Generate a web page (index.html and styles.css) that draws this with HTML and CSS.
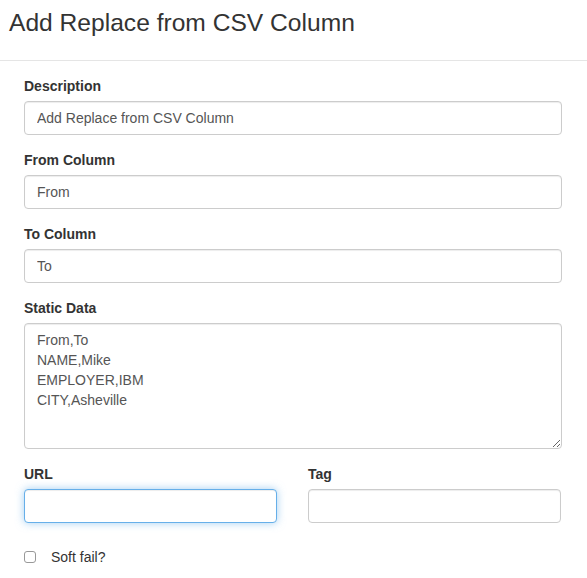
FILE: index.html
```html
<!DOCTYPE html>
<html>
<head>
<meta charset="utf-8">
<link rel="stylesheet" href="styles.css">
</head>
<body>
<div class="modal">
  <div class="modal-header">
    <h4 class="modal-title">Add Replace from CSV Column</h4>
  </div>
  <div class="modal-body">
    <div class="form-group">
      <label class="lbl">Description</label>
      <input class="form-control" type="text" value="Add Replace from CSV Column">
    </div>
    <div class="form-group">
      <label class="lbl">From Column</label>
      <input class="form-control" type="text" value="From">
    </div>
    <div class="form-group">
      <label class="lbl">To Column</label>
      <input class="form-control" type="text" value="To">
    </div>
    <div class="form-group">
      <label class="lbl">Static Data</label>
      <textarea class="form-control area">From,To
NAME,Mike
EMPLOYER,IBM
CITY,Asheville</textarea>
    </div>
    <div class="row">
      <div class="form-group">
        <label class="lbl">URL</label>
        <input class="form-control focus" type="text">
      </div>
      <div class="form-group">
        <label class="lbl">Tag</label>
        <input class="form-control" type="text">
      </div>
    </div>
    <div class="check">
      <span class="box"></span>
      <span class="check-label">Soft fail?</span>
    </div>
  </div>
</div>
</body>
</html>
```

FILE: styles.css
```css
* { box-sizing: border-box; }
html, body { margin: 0; padding: 0; background: #fff; }
body {
  font-family: "Liberation Sans", Arial, sans-serif;
  font-size: 14px;
  line-height: 20px;
  color: #333;
}
.modal { width: 587px; }
.modal-header {
  height: 61px;
  border-bottom: 1px solid #e5e5e5;
  padding: 7px 9px 0;
}
.modal-title {
  margin: 0;
  font-size: 24.6px;
  font-weight: normal;
  line-height: 32px;
  color: #333;
}
.modal-body {
  padding: 15px 25px 0 24px;
}
.form-group { margin-bottom: 15px; display: flex; flex-direction: column; }
.lbl {
  display: block;
  font-weight: bold;
  margin-bottom: 5px;
  line-height: 20px;
}
.form-control {
  display: block;
  width: 100%;
  height: 34px;
  padding: 6px 12px;
  font-family: "Liberation Sans", Arial, sans-serif;
  font-size: 14px;
  line-height: 20px;
  color: #555;
  background: #fff;
  border: 1px solid #ccc;
  border-radius: 4px;
  box-shadow: inset 0 1px 1px rgba(0,0,0,.075);
  outline: none;
  margin: 0;
}
.area {
  height: 126px;
  resize: vertical;
  padding: 6px 12px;
}
.focus {
  border-color: #66afe9;
  box-shadow: inset 0 1px 1px rgba(0,0,0,.075), 0 0 8px rgba(102,175,233,.6);
}
.row {
  display: grid;
  grid-template-columns: 253px 253px;
  column-gap: 31px;
  margin-top: 1px;
}
.check {
  display: flex;
  align-items: center;
  margin-top: 9px;
  height: 20px;
}
.box {
  width: 12px;
  height: 12px;
  border: 1px solid #999;
  border-radius: 3px;
  background: #fff;
  margin-right: 15px;
}
.check-label { color: #333; }
```
